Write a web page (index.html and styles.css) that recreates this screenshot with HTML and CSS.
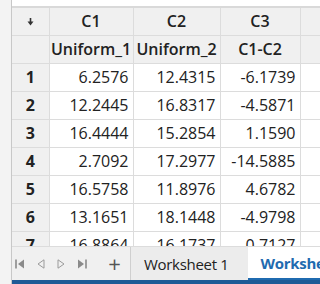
FILE: index.html
```html
<!DOCTYPE html>
<html lang="en">
<head>
  <meta charset="UTF-8" />
  <title>Worksheet</title>
  <link rel="stylesheet" href="styles.css">
</head>
<body>
  <div class="app">
    <div class="side"></div>
    <div class="main">
      <div class="topbar"></div>
      <div class="grid-wrap">
        <table class="grid">
          <colgroup>
            <col class="c-row">
            <col class="c-1">
            <col class="c-2">
            <col class="c-3">
            <col class="c-4">
          </colgroup>
          <tr class="head">
            <td class="corner">
              <svg width="7" height="8" viewBox="0 0 7 8"><path d="M3.5 0v4" stroke="#333" stroke-width="1.6"/><path d="M0.5 3.5h6L3.5 7.5z" fill="#333"/></svg>
            </td>
            <td>C1</td><td>C2</td><td>C3</td><td></td>
          </tr>
          <tr class="head">
            <td></td>
            <td>Uniform_1</td><td>Uniform_2</td><td>C1-C2</td><td></td>
          </tr>
          <tr><td class="num">1</td><td>6.2576</td><td>12.4315</td><td>-6.1739</td><td></td></tr>
          <tr><td class="num">2</td><td>12.2445</td><td>16.8317</td><td>-4.5871</td><td></td></tr>
          <tr><td class="num">3</td><td>16.4444</td><td>15.2854</td><td>1.1590</td><td></td></tr>
          <tr><td class="num">4</td><td>2.7092</td><td>17.2977</td><td>-14.5885</td><td></td></tr>
          <tr><td class="num">5</td><td>16.5758</td><td>11.8976</td><td>4.6782</td><td></td></tr>
          <tr><td class="num">6</td><td>13.1651</td><td>18.1448</td><td>-4.9798</td><td></td></tr>
          <tr><td class="num">7</td><td>16.8864</td><td>16.1737</td><td>0.7127</td><td></td></tr>
        </table>
      </div>
      <div class="tabs">
        <div class="nav">
          <svg width="10" height="10" viewBox="0 0 10 10"><path d="M1 0.5v9" stroke="#8a8a8a" stroke-width="1.6"/><path d="M9 0.5v9L3 5z" fill="#8a8a8a"/></svg>
          <svg width="8" height="10" viewBox="0 0 8 10"><path d="M7 0.8v8.4L1 5z" fill="none" stroke="#9a9a9a" stroke-width="1"/></svg>
          <svg width="8" height="10" viewBox="0 0 8 10"><path d="M1 0.8v8.4L7 5z" fill="none" stroke="#9a9a9a" stroke-width="1"/></svg>
          <svg width="10" height="10" viewBox="0 0 10 10"><path d="M1 0.5v9L7 5z" fill="#8a8a8a"/><path d="M9 0.5v9" stroke="#8a8a8a" stroke-width="1.6"/></svg>
        </div>
        <div class="add">+</div>
        <div class="tab">Worksheet 1</div>
        <div class="tab active">Worksheet 2</div>
      </div>
      <div class="status"></div>
    </div>
  </div>
</body>
</html>
```

FILE: styles.css
```css
body {
  margin: 0;
  font-family: "Open Sans", "Noto Sans", sans-serif;
  background: #f3f3f3;
  color: #222;
}

.app {
  display: flex;
  width: 320px;
  height: 284px;
  overflow: hidden;
}

.side {
  width: 11px;
  flex: none;
  background: #f3f3f3;
  border-right: 1px solid #c8c8c8;
}

.main {
  flex: 1;
  display: flex;
  flex-direction: column;
  min-width: 0;
  overflow: hidden;
}

.topbar {
  height: 6px;
  background: #fff;
  border-bottom: 2px solid #d9d9d9;
  flex: none;
}

.grid-wrap {
  height: 238px;
  overflow: hidden;
  background: #fff;
  flex: none;
}

.grid {
  border-collapse: collapse;
  table-layout: fixed;
  width: 340px;
  font-size: 16px;
}

.c-row { width: 37px; }
.c-1 { width: 84px; }
.c-2 { width: 87px; }
.c-3 { width: 80px; }
.c-4 { width: 52px; }

.grid td {
  height: 27px;
  padding: 0 4px 0 0;
  border: 1px solid #dcdcdc;
  text-align: right;
  white-space: nowrap;
  overflow: hidden;
  line-height: 27px;
}

.grid tr:first-child td {
  border-top: none;
}

.grid td:first-child {
  border-left: none;
}

.head td {
  background: #f0f0f0;
  text-align: center;
  font-weight: 600;
  padding: 0;
}

.corner svg {
  display: block;
  margin: 0 auto;
}

.grid td.num {
  background: #f0f0f0;
  text-align: center;
  font-weight: 700;
  padding: 0;
}

.tabs {
  height: 34px;
  flex: none;
  display: flex;
  align-items: stretch;
  background: #f0f0f0;
  border-top: 1px solid #dcdcdc;
  box-sizing: border-box;
}

.nav {
  flex: none;
  display: flex;
  align-items: center;
  justify-content: space-between;
  width: 72px;
  padding: 0 0 0 3px;
}

.add {
  flex: none;
  width: 31px;
  padding: 0 0 2px 12px;
  display: flex;
  align-items: center;
  justify-content: center;
  font-size: 22px;
  color: #555;
}

.tab {
  flex: none;
  display: flex;
  align-items: center;
  padding: 0 19px 0 13px;
  font-size: 15px;
  letter-spacing: -0.3px;
  color: #222;
  white-space: nowrap;
  border-left: 1px solid #cfcfcf;
  background: #ececec;
}

.tab.active {
  background: #fff;
  color: #1f6bb0;
  font-weight: 700;
  padding-left: 13px;
  border-left: none;
  border-bottom: 2px solid #1f6bb0;
}

.status {
  height: 4px;
  flex: none;
  background: #1e5a96;
}
```
